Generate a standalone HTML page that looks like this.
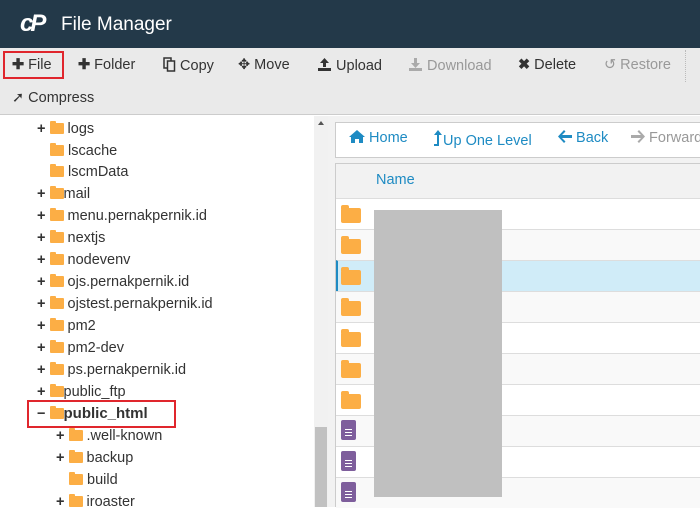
<!DOCTYPE html>
<html><head><meta charset="utf-8"><style>
*{margin:0;padding:0;box-sizing:border-box}
body{width:700px;height:507px;overflow:hidden;position:relative;font-family:"Liberation Sans",sans-serif;font-size:14px;background:#fff;color:#333}
.a{position:absolute;white-space:nowrap}
.hdr{left:0;top:0;width:700px;height:48px;background:#233949}
.tb{left:0;top:48px;width:700px;height:67px;background:#eaeaea;border-bottom:1px solid #ccc}
.tbi{top:57px;font-size:14.5px;color:#333}
.tbi svg{vertical-align:-2px}
.dis{color:#999}
.f{display:inline-block;width:14px;height:11px;background:#fcae45;border-radius:1px;position:relative;vertical-align:-1px}
.f:before{content:"";position:absolute;left:0;top:-2px;width:6px;height:3px;background:#fcae45;border-radius:1px 1px 0 0}
.tr{font-size:14.5px;color:#333}
.pl{font-weight:bold;font-size:15px}
.row{left:336px;width:364px;height:31px;border-top:1px solid #ddd}
.bf{position:absolute;width:20px;height:15px;background:#fcae45;border-radius:2px}
.bf:before{content:"";position:absolute;left:0;top:-3px;width:8px;height:4px;background:#fcae45;border-radius:2px 2px 0 0}
.doc{position:absolute;width:15px;height:20px;background:#7e5e9c;border-radius:2px}
.doc i{position:absolute;left:4px;width:7px;height:1px;background:#fff}
.nav{top:130px;color:#1e8bc3;font-size:14.5px}
.nav svg{vertical-align:-1px}
</style></head><body>
<div class="a hdr"></div>
<div class="a" style="left:20px;top:10px;color:#fff;font-weight:bold;font-style:italic;font-size:24px;letter-spacing:-3px">cP</div>
<div class="a" style="left:61px;top:14px;color:#fff;font-size:19px">File Manager</div>
<div class="a tb"></div>
<div class="a" style="left:3px;top:51px;width:61px;height:28px;border:2px solid #e0262d"></div>
<div class="a tbi" style="left:12px"><b>✚</b> File</div>
<div class="a tbi" style="left:78px"><b>✚</b> Folder</div>
<div class="a tbi" style="left:163px"><svg width="13" height="15" viewBox="0 0 13 15"><rect x="1" y="1" width="7" height="10" fill="none" stroke="#333" stroke-width="1.5"/><rect x="4.5" y="4" width="7" height="10" fill="#eaeaea" stroke="#333" stroke-width="1.5"/></svg> Copy</div>
<div class="a tbi" style="left:238px">✥ Move</div>
<div class="a tbi" style="left:317px"><svg width="15" height="15" viewBox="0 0 15 15"><path d="M7.5 1L3 6h3v4h3V6h3z M1 11h13v3H1z" fill="#333"/></svg> Upload</div>
<div class="a tbi dis" style="left:408px"><svg width="15" height="15" viewBox="0 0 15 15"><path d="M6 1h3v5h3l-4.5 5L3 6h3z M1 11h13v3H1z" fill="#aaa"/></svg> Download</div>
<div class="a tbi" style="left:518px"><b>✖</b> Delete</div>
<div class="a tbi dis" style="left:604px">↺ Restore</div>
<div class="a" style="left:685px;top:50px;height:32px;border-left:1px dotted #bbb"></div>
<div class="a tbi" style="left:12px;top:90px">➚ Compress</div>

<div class="a" style="left:314px;top:116px;width:14px;height:391px;background:#f1f1f1"></div>
<div class="a" style="left:318px;top:121px;width:0;height:0;border:3px solid transparent;border-bottom:4px solid #555;border-top:0"></div>
<div class="a" style="left:315px;top:427px;width:12px;height:80px;background:#c1c1c1"></div>
<div class="a" style="left:328px;top:116px;width:372px;height:391px;background:#f2f2f2"></div>

<div class="a tr" style="left:37px;top:121px"><b>+</b> <span class="f"></span> logs</div>
<div class="a tr" style="left:50px;top:143px"><span class="f"></span> lscache</div>
<div class="a tr" style="left:50px;top:164px"><span class="f"></span> lscmData</div>
<div class="a tr" style="left:37px;top:186px"><b>+</b> <span class="f"></span>mail</div>
<div class="a tr" style="left:37px;top:208px"><b>+</b> <span class="f"></span> menu.pernakpernik.id</div>
<div class="a tr" style="left:37px;top:230px"><b>+</b> <span class="f"></span> nextjs</div>
<div class="a tr" style="left:37px;top:252px"><b>+</b> <span class="f"></span> nodevenv</div>
<div class="a tr" style="left:37px;top:274px"><b>+</b> <span class="f"></span> ojs.pernakpernik.id</div>
<div class="a tr" style="left:37px;top:296px"><b>+</b> <span class="f"></span> ojstest.pernakpernik.id</div>
<div class="a tr" style="left:37px;top:318px"><b>+</b> <span class="f"></span> pm2</div>
<div class="a tr" style="left:37px;top:340px"><b>+</b> <span class="f"></span> pm2-dev</div>
<div class="a tr" style="left:37px;top:362px"><b>+</b> <span class="f"></span> ps.pernakpernik.id</div>
<div class="a tr" style="left:37px;top:384px"><b>+</b> <span class="f"></span>public_ftp</div>
<div class="a" style="left:27px;top:400px;width:149px;height:28px;border:2px solid #e0262d"></div>
<div class="a tr" style="left:37px;top:405px"><b>−</b> <span class="f"></span><span class="pl">public_html</span></div>
<div class="a tr" style="left:56px;top:428px"><b>+</b> <span class="f"></span> .well-known</div>
<div class="a tr" style="left:56px;top:450px"><b>+</b> <span class="f"></span> backup</div>
<div class="a tr" style="left:69px;top:472px"><span class="f"></span> build</div>
<div class="a tr" style="left:56px;top:494px"><b>+</b> <span class="f"></span> iroaster</div>

<div class="a" style="left:335px;top:122px;width:365px;height:36px;background:#fff;border:1px solid #ccc;border-right:0"></div>
<div class="a nav" style="left:349px"><svg width="16" height="13" viewBox="0 0 16 13"><path d="M8 0L0 7h2v6h4V9h4v4h4V7h2z" fill="#1e8bc3"/></svg> Home</div>
<div class="a nav" style="left:433px"><svg width="10" height="16" viewBox="0 0 10 16"><path d="M5 0L1 5h3v9H1v2h5V5h3z" fill="#1e8bc3"/></svg>Up One Level</div>
<div class="a nav" style="left:558px"><svg width="14" height="13" viewBox="0 0 14 13"><path d="M6 0L0 6.5 6 13l1.5-1.5L4 8h10V5H4l3.5-3.5z" fill="#1e8bc3"/></svg> Back</div>
<div class="a nav" style="left:631px;color:#999"><svg width="14" height="13" viewBox="0 0 14 13"><path d="M8 0l6 6.5L8 13l-1.5-1.5L10 8H0V5h10L6.5 1.5z" fill="#aaa"/></svg> Forward</div>

<div class="a" style="left:335px;top:163px;width:365px;height:344px;background:#fff;border:1px solid #ccc;border-right:0"></div>
<div class="a" style="left:336px;top:164px;width:364px;height:34px;background:#f2f2f2"></div>
<div class="a" style="left:376px;top:172px;color:#1e8bc3;font-size:14.5px">Name</div>
<div class="a row" style="top:198px;background:#fff"></div>
<div class="a row" style="top:229px;background:#f9f9f9"></div>
<div class="a row" style="top:260px;background:#d0ecf8;border-left:2px solid #1e8bc3"></div>
<div class="a row" style="top:291px;background:#f9f9f9"></div>
<div class="a row" style="top:322px;background:#fff"></div>
<div class="a row" style="top:353px;background:#f9f9f9"></div>
<div class="a row" style="top:384px;background:#fff"></div>
<div class="a row" style="top:415px;background:#f9f9f9"></div>
<div class="a row" style="top:446px;background:#fff"></div>
<div class="a row" style="top:477px;background:#f9f9f9"></div>
<div class="bf" style="left:341px;top:208px"></div>
<div class="bf" style="left:341px;top:239px"></div>
<div class="bf" style="left:341px;top:270px"></div>
<div class="bf" style="left:341px;top:301px"></div>
<div class="bf" style="left:341px;top:332px"></div>
<div class="bf" style="left:341px;top:363px"></div>
<div class="bf" style="left:341px;top:394px"></div>
<div class="doc" style="left:341px;top:420px"><i style="top:9px"></i><i style="top:12px"></i><i style="top:15px"></i></div>
<div class="doc" style="left:341px;top:451px"><i style="top:9px"></i><i style="top:12px"></i><i style="top:15px"></i></div>
<div class="doc" style="left:341px;top:482px"><i style="top:9px"></i><i style="top:12px"></i><i style="top:15px"></i></div>
<div class="a" style="left:374px;top:210px;width:128px;height:287px;background:#c0c0c0"></div>
</body></html>
